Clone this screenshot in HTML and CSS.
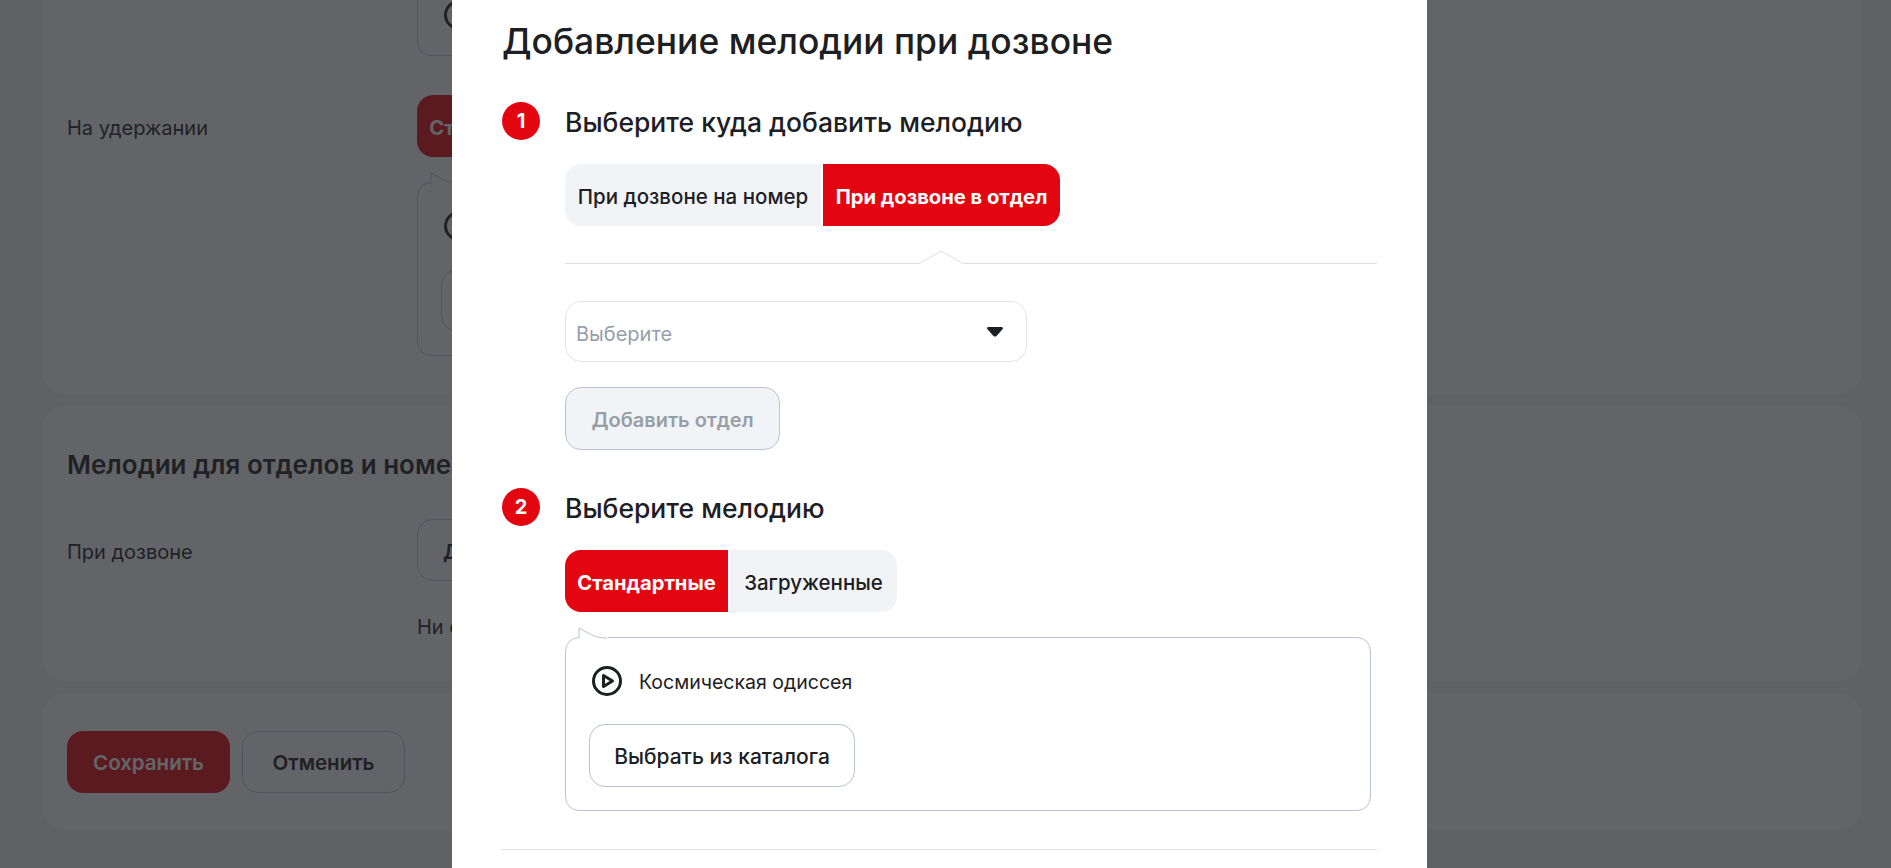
FILE: index.html
```html
<!DOCTYPE html>
<html lang="ru">
<head>
    <meta charset="UTF-8">
    <title>Добавление мелодии при дозвоне</title>
    <link rel="stylesheet" href="styles.css">
</head>
<body>
    <div class="page">
        <section class="card card-top">
            <div class="row">
                <div></div>
                <div class="sound-box-first">
                    <svg class="play-icon" viewBox="0 0 32 32"><circle cx="16" cy="16" r="13.5"/><path d="M12.5 10.5v11l9-5.500z"/></svg>
                </div>
            </div>
            <div class="row row-hold">
                <div class="row-label">На удержании</div>
                <div>
                    <div class="tabs">
                        <button class="tab tab-active tab-standard">Стандартные</button>
                        <button class="tab tab-loaded">Загруженные</button>
                    </div>
                    <div class="melody-box">
                        <svg class="box-tail" viewBox="0 0 30 12"><path d="M1 11V1l13 7c4 2 9 3 15 3"/></svg>
                        <div class="melody-row">
                            <svg class="play-icon" viewBox="0 0 32 32"><circle cx="16" cy="16" r="13.5"/><path d="M12.500 10.500v11l9-5.500z"/></svg>
                            <span class="melody-name">Космическая одиссея</span>
                        </div>
                        <button class="btn btn-outline btn-catalog">Выбрать из каталога</button>
                    </div>
                </div>
            </div>
        </section>

        <section class="card card-dept">
            <h2 class="card-title">Мелодии для отделов и номеров</h2>
            <div class="row">
                <div class="row-label">При дозвоне</div>
                <div>
                    <button class="btn btn-outline">Добавить мелодию</button>
                    <p class="empty-note">Ни одной мелодии не добавлено</p>
                </div>
            </div>
        </section>

        <section class="card card-actions">
            <button class="btn btn-primary">Сохранить</button>
            <button class="btn btn-outline">Отменить</button>
        </section>
    </div>

    <div class="overlay"></div>

    <div class="modal">
        <h1 class="modal-title">Добавление мелодии при дозвоне</h1>

        <div class="step-head">
            <span class="step-num">1</span>
            <h3 class="step-title">Выберите куда добавить мелодию</h3>
        </div>
        <div class="step-body">
            <div class="tabs">
                <button class="tab tab-number">При дозвоне на номер</button>
                <button class="tab tab-active tab-dept">При дозвоне в отдел</button>
            </div>
            <div class="notch-line">
                <svg class="notch" viewBox="0 0 44 14"><path d="M0 13h1L22 1l21 12h1"/></svg>
            </div>
            <div class="select">
                <span class="select-text">Выберите</span>
                <svg class="select-caret" viewBox="0 0 16 10"><path d="M1.500 0h13c1.300 0 1.900 1.400 1 2.300l-5.700 6.500c-1 1.100-2.600 1.100-3.600 0L.5 2.300C-.4 1.400.2 0 1.500 0z"/></svg>
            </div>
            <button class="btn btn-disabled">Добавить отдел</button>
        </div>

        <div class="step-head step-head-second">
            <span class="step-num">2</span>
            <h3 class="step-title">Выберите мелодию</h3>
        </div>
        <div class="step-body">
            <div class="tabs">
                <button class="tab tab-active tab-standard">Стандартные</button>
                <button class="tab tab-loaded">Загруженные</button>
            </div>
            <div class="melody-box">
                <svg class="box-tail" viewBox="0 0 30 12"><path d="M1 11V1l13 7c4 2 9 3 15 3"/></svg>
                <div class="melody-row">
                    <svg class="play-icon" viewBox="0 0 32 32"><circle cx="16" cy="16" r="13.5"/><path d="M12.500 10.500v11l9-5.500z"/></svg>
                    <span class="melody-name">Космическая одиссея</span>
                </div>
                <button class="btn btn-outline btn-catalog">Выбрать из каталога</button>
            </div>
        </div>
        <div class="modal-divider"></div>
    </div>
</body>
</html>
```

FILE: styles.css
```css
* {
    margin: 0;
    padding: 0;
    box-sizing: border-box;
}

html, body {
    height: 868px;
    overflow: hidden;
}

body {
    font-family: Inter, "Liberation Sans", sans-serif;
    background: #f2f3f7;
    color: #1d2023;
}

button {
    font-family: inherit;
    cursor: pointer;
}

/* page under the overlay, scrolled down a bit */
.page {
    margin-top: -60px;
    padding: 0 29px 0 42px;
    display: flex;
    flex-direction: column;
    gap: 12px;
}

.card {
    background: #fff;
    border-radius: 24px;
    padding: 0 25px;
}

.card-top {
    height: 454px;
    border-radius: 0 0 24px 24px;
}

.card-dept {
    height: 275px;
    padding-top: 42px;
}

.card-actions {
    height: 137px;
    display: flex;
    align-items: center;
    gap: 12px;
}

.card-title {
    font-size: 26px;
    line-height: 34px;
    font-weight: 600;
    margin-bottom: 37px;
}

.row {
    display: grid;
    grid-template-columns: 350px 1fr;
}

.row-label {
    font-size: 20px;
    line-height: 66px;
}

.row-hold {
    margin-top: 39px;
}

.sound-box-first {
    width: 806px;
    height: 116px;
    border: 1px solid #bcc3d0;
    border-radius: 14px;
    padding: 58px 25px 0;
}

.empty-note {
    font-size: 20px;
    line-height: 26px;
    margin-top: 33px;
}

/* modal */
.overlay {
    position: absolute;
    inset: 0;
    background: rgba(33, 34, 39, 0.7);
}

.modal {
    position: absolute;
    top: 0;
    left: 452px;
    width: 975px;
    height: 868px;
    background: #fff;
    padding: 18px 50px 0;
}

.modal-title {
    font-size: 35.400px;
    line-height: 48px;
    font-weight: 500;
    margin-bottom: 35px;
}

.step-head {
    display: flex;
    align-items: center;
    gap: 25px;
    height: 39px;
}

.step-head-second {
    margin-top: 37px;
}

.step-num {
    width: 38px;
    height: 38px;
    border-radius: 50%;
    background: #e30611;
    color: #fff;
    font-size: 20px;
    font-weight: 700;
    display: flex;
    align-items: center;
    justify-content: center;
}

.step-title {
    font-size: 26.500px;
    line-height: 34px;
    font-weight: 500;
    padding-top: 2px;
}

.step-body {
    margin-left: 63px;
    padding-top: 24px;
}

.tabs {
    display: flex;
    gap: 2px;
    height: 62px;
}

.tab {
    border: none;
    background: #f2f3f7;
    color: #1d2023;
    font-size: 20.500px;
    font-weight: 500;
    padding: 2px 0 0;
    white-space: nowrap;
}

.tab:first-child {
    border-radius: 16px 0 0 16px;
}

.tab:last-child {
    border-radius: 0 16px 16px 0;
}

.tab-active {
    background: #e30611;
    color: #fff;
    font-weight: 700;
    font-size: 20.200px;
}

.tab-number { width: 256px; }
.tab-dept { width: 237px; }
.tab-standard { width: 163px; }
.tab-loaded { width: 167px; }

.notch-line {
    height: 1px;
    background: #dde0e8;
    margin-top: 37px;
    position: relative;
}

.notch {
    position: absolute;
    left: 354px;
    top: -13px;
    width: 44px;
    height: 14px;
    background: #fff;
    fill: none;
    stroke: #dde0e8;
}

.select {
    width: 462px;
    height: 61px;
    margin-top: 37px;
    border: 1px solid #e2e5eb;
    border-radius: 16px;
    padding: 0 23px 0 10px;
    display: flex;
    align-items: center;
    justify-content: space-between;
}

.select-text {
    font-size: 20px;
    color: #969fa8;
    padding-top: 4px;
}

.select-caret {
    width: 16px;
    height: 10px;
    fill: #1d2023;
}

.btn {
    height: 62px;
    border-radius: 16px;
    font-size: 20.500px;
    font-weight: 600;
    padding: 2px 25px 0;
    white-space: nowrap;
}

.btn-primary {
    background: #e30611;
    border: none;
    color: #fff;
    width: 163px;
}

.btn-outline {
    background: #fff;
    border: 1px solid #bcc3d0;
    color: #1d2023;
}

.card-actions .btn-outline {
    width: 163px;
}

.btn-disabled {
    display: block;
    width: 215px;
    height: 63px;
    margin-top: 25px;
    padding: 2px 0 0;
    background: #f2f3f7;
    border: 1px solid #bcc3d0;
    color: #969fa8;
    font-size: 20px;
}

.melody-box {
    position: relative;
    width: 806px;
    height: 174px;
    margin-top: 25px;
    border: 1px solid #bcc3d0;
    border-radius: 14px;
    padding: 27px 23px 0;
}

.box-tail {
    position: absolute;
    left: 12px;
    top: -11px;
    width: 30px;
    height: 12px;
    background: linear-gradient(#fff, #fff) no-repeat 1px 10px / 29px 2px;
    fill: none;
    stroke: #bcc3d0;
}

.melody-row {
    display: flex;
    align-items: center;
    gap: 16px;
    margin-left: 2px;
    height: 32px;
}

.play-icon {
    display: block;
    width: 32px;
    height: 32px;
    flex: none;
    fill: none;
    stroke: #1d2023;
    stroke-width: 3;
    stroke-linejoin: round;
}

.melody-name {
    font-size: 19.500px;
    padding-top: 1px;
}

.btn-catalog {
    display: block;
    width: 266px;
    height: 63px;
    margin-top: 27px;
    padding: 2px 0 0;
    font-weight: 500;
    font-size: 21px;
}

.modal-divider {
    height: 1px;
    background: #dde0e8;
    margin-top: 38px;
}
```
